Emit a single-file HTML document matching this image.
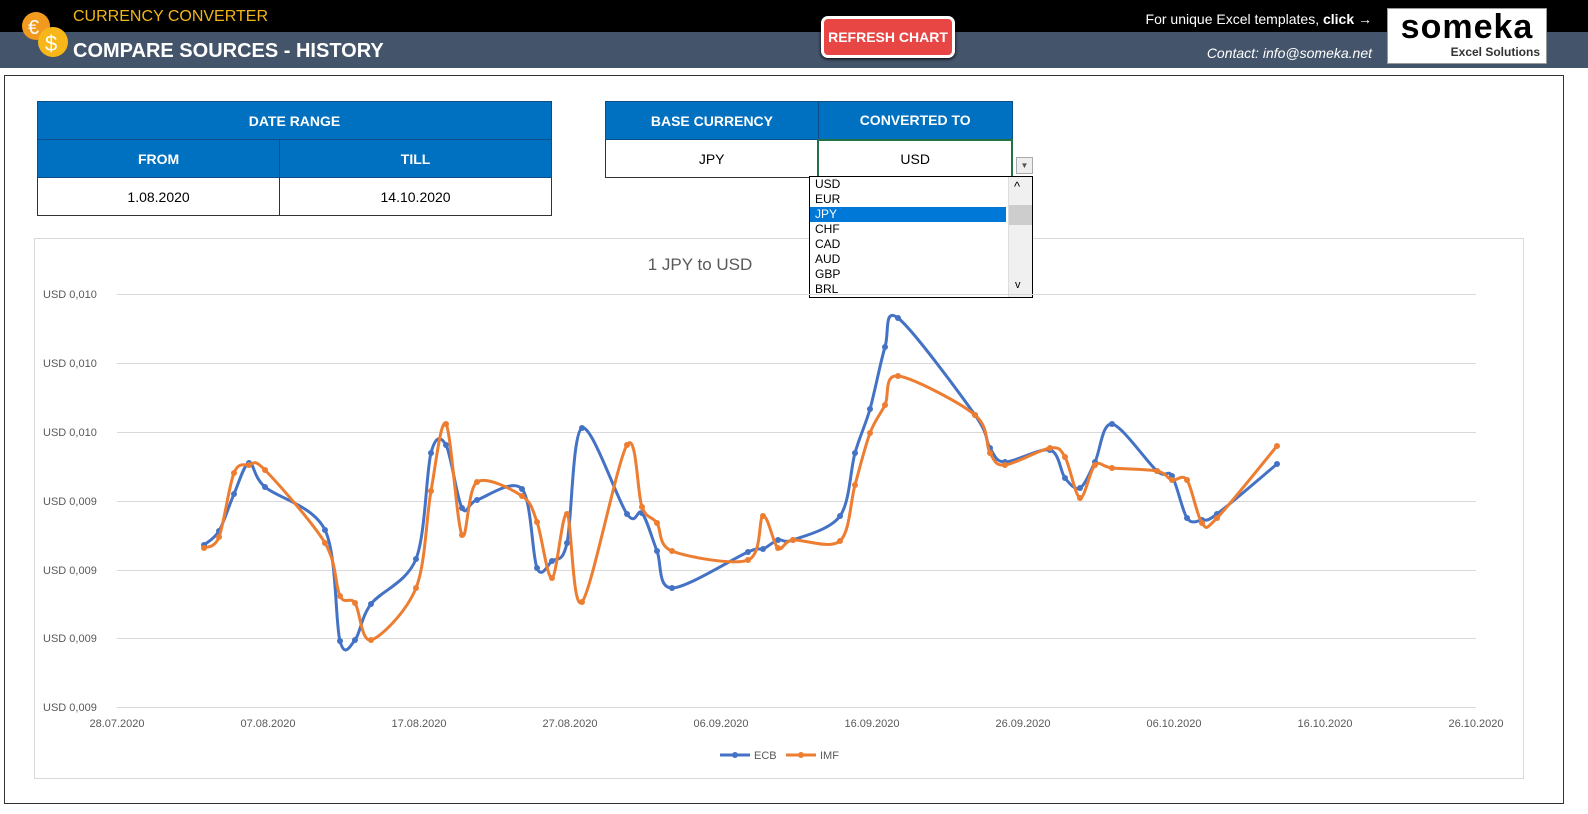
<!DOCTYPE html>
<html><head><meta charset="utf-8">
<style>
*{margin:0;padding:0;box-sizing:border-box}
body{width:1588px;height:814px;background:#fff;font-family:"Liberation Sans",sans-serif;position:relative;overflow:hidden}
.abs{position:absolute}
.top{left:0;top:0;width:1588px;height:32px;background:#000}
.band{left:0;top:32px;width:1588px;height:36px;background:#44546a}
.t1{left:73px;top:8px;color:#f2b619;font-size:16px}
.t2{left:73px;top:40px;color:#fff;font-size:20px;font-weight:bold}
.btn{left:821px;top:16px;width:134px;height:42px;background:#e84545;border:3px solid #fff;border-radius:7px;color:#fff;font-weight:bold;font-size:14px;text-align:center;line-height:36px;box-shadow:0 1px 3px #000}
.r1{right:216px;top:11px;color:#fff;font-size:14px}
.r2{right:216px;top:45px;color:#fff;font-size:14px;font-style:italic}
.logo{left:1387px;top:8px;width:160px;height:56px;background:#fff;border:1px solid #999}
.main{left:4px;top:75px;width:1560px;height:729px;border:1px solid #333}
table{border-collapse:collapse;position:absolute;font-size:14px;text-align:center}
td{border:1px solid #333;height:38px}
th{background:#0070c0;color:#fff;font-weight:bold;font-size:14px;height:38px;border:1px solid #0a4f8c}
.dd{left:809px;top:176px;width:224px;height:122px;border:1px solid #000;background:#fff;font-size:12px}
.dd div{height:15px;line-height:15px;padding-left:5px;width:196px}
</style></head><body>
<div class="abs top"></div><div class="abs band"></div>
<svg class="abs" style="left:20px;top:10px" width="55" height="55">
<circle cx="16" cy="16" r="14" fill="#f29a1f"/><text x="8" y="24" font-size="20" fill="#fff" font-family="Liberation Sans">€</text>
<circle cx="33" cy="32" r="15" fill="#f7b718"/><text x="25" y="41" font-size="22" fill="#fff" font-family="Liberation Sans">$</text></svg>
<div class="abs t1">CURRENCY CONVERTER</div>
<div class="abs t2">COMPARE SOURCES - HISTORY</div>
<div class="abs btn">REFRESH CHART</div>
<div class="abs r1">For unique Excel templates, <b>click →</b></div>
<div class="abs r2">Contact: info@someka.net</div>
<div class="abs logo"><div style="font-size:34px;font-weight:bold;text-align:center;line-height:36px;letter-spacing:1px">someka</div><div style="font-size:12px;font-weight:bold;color:#333;text-align:right;padding-right:6px">Excel Solutions</div></div>
<div class="abs main"></div>
<table style="left:37px;top:101px;width:515px"><tr><th colspan="2">DATE RANGE</th></tr><tr><th>FROM</th><th>TILL</th></tr><tr><td>1.08.2020</td><td>14.10.2020</td></tr></table>
<table style="left:605px;top:101px;width:408px"><tr><th>BASE CURRENCY</th><th>CONVERTED TO</th></tr><tr><td>JPY</td><td style="border:2px solid #217346">USD</td></tr></table>
<div class="abs" style="left:1016px;top:157px;width:17px;height:17px;border:1px solid #aaa;background:#eee;font-size:8px;text-align:center;line-height:16px;color:#555">▼</div>
<div class="abs" style="left:34px;top:238px;width:1490px;height:541px;border:1px solid #d9d9d9"></div>
<div class="abs dd"><div>USD</div><div>EUR</div><div style="background:#0078d7;color:#fff">JPY</div><div>CHF</div><div>CAD</div><div>AUD</div><div>GBP</div><div>BRL</div>
<div class="abs" style="right:0;top:0;width:24px;height:120px;background:#f0f0f0;border-left:1px solid #ddd"><div style="position:absolute;top:28px;left:0;width:23px;height:20px;background:#cdcdcd;padding:0"></div><div style="position:absolute;top:2px;left:5px;font-size:13px;padding:0;width:auto">^</div><div style="position:absolute;bottom:4px;left:6px;font-size:11px;padding:0;width:auto">v</div></div></div>
<svg class="abs" style="left:0;top:0" width="1588" height="814" id="ch">
<text x="700" y="270" font-size="17" fill="#595959" text-anchor="middle" font-family="Liberation Sans">1 JPY to USD</text>
<g stroke="#d9d9d9" stroke-width="1">
<line x1="117" y1="294.5" x2="1476" y2="294.5"/><line x1="117" y1="363.5" x2="1476" y2="363.5"/><line x1="117" y1="432.5" x2="1476" y2="432.5"/><line x1="117" y1="501.5" x2="1476" y2="501.5"/><line x1="117" y1="570.5" x2="1476" y2="570.5"/><line x1="117" y1="638.5" x2="1476" y2="638.5"/><line x1="117" y1="707.5" x2="1476" y2="707.5"/></g>
<g font-size="11" fill="#595959" font-family="Liberation Sans">
<text x="43" y="298">USD 0,010</text><text x="43" y="367">USD 0,010</text><text x="43" y="436">USD 0,010</text><text x="43" y="505">USD 0,009</text><text x="43" y="574">USD 0,009</text><text x="43" y="642">USD 0,009</text><text x="43" y="711">USD 0,009</text>
<g text-anchor="middle"><text x="117" y="727">28.07.2020</text><text x="268" y="727">07.08.2020</text><text x="419" y="727">17.08.2020</text><text x="570" y="727">27.08.2020</text><text x="721" y="727">06.09.2020</text><text x="872" y="727">16.09.2020</text><text x="1023" y="727">26.09.2020</text><text x="1174" y="727">06.10.2020</text><text x="1325" y="727">16.10.2020</text><text x="1476" y="727">26.10.2020</text></g>
<text x="754" y="759">ECB</text><text x="820" y="759">IMF</text></g>
<line x1="720" y1="755" x2="750" y2="755" stroke="#4472c4" stroke-width="3"/><circle cx="735" cy="755" r="3" fill="#4472c4"/>
<line x1="786" y1="755" x2="816" y2="755" stroke="#ed7d31" stroke-width="3"/><circle cx="801" cy="755" r="3" fill="#ed7d31"/>
<g id="lines"></g>
</svg>
<script>
var ecb=[[204,545],[219,531],[234,494],[249,463],[265,487],[325,530],[340,641],[355,640],[371,604],[416,559],[431,453],[446,445],[462,508],[477,500],[522,489],[537,568],[552,561],[567,543],[582,428],[627,514],[642,513],[657,551],[672,588],[748,552],[763,549],[778,540],[793,540],[840,516],[855,453],[870,409],[885,347],[898,318],[975,415],[990,448],[1005,462],[1050,450],[1065,478],[1080,488],[1095,462],[1112,424],[1157,471],[1172,476],[1187,518],[1202,520],[1217,514],[1277,464]];
var imf=[[204,548],[219,537],[234,473],[249,465],[265,470],[325,543],[340,596],[355,603],[371,640],[416,588],[431,491],[446,424],[462,535],[477,482],[522,496],[537,522],[552,578],[567,514],[582,602],[627,445],[642,507],[657,523],[672,551],[748,560],[763,516],[778,548],[793,540],[840,541],[855,485],[870,433],[885,405],[898,376],[975,415],[990,453],[1005,465],[1050,448],[1065,457],[1080,498],[1095,465],[1112,468],[1157,471],[1172,480],[1187,480],[1202,523],[1217,518],[1277,446]];
function path(p){var d="M"+p[0];for(var i=0;i<p.length-1;i++){var a=p[i-1]||p[i],b=p[i],c=p[i+1],e=p[i+2]||c;var t=0.16;d+=" C"+(b[0]+(c[0]-a[0])*t)+","+(b[1]+(c[1]-a[1])*t)+" "+(c[0]-(e[0]-b[0])*t)+","+(c[1]-(e[1]-b[1])*t)+" "+c;}return d;}
var g=document.getElementById("lines"),h="";
[[ecb,"#4472c4"],[imf,"#ed7d31"]].forEach(function(s){h+='<path d="'+path(s[0])+'" fill="none" stroke="'+s[1]+'" stroke-width="3"/>';s[0].forEach(function(q){h+='<circle cx="'+q[0]+'" cy="'+q[1]+'" r="3" fill="'+s[1]+'"/>';});});
g.innerHTML=h;
</script>
</body></html>
